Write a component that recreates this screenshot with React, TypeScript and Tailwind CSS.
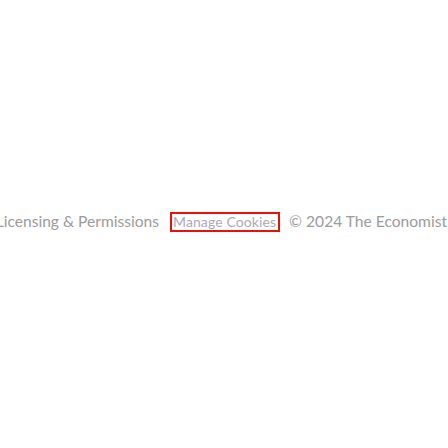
export default function App() {
  return (
    <div className="w-[448px] h-[448px] bg-white overflow-hidden font-['Lato',sans-serif]">
      <div className="flex justify-end items-center pt-[210px] pr-[1px] whitespace-nowrap text-[15.6px] text-[#9b9b9b]">
        <span className="shrink-0">Licensing &amp; Permissions</span>
        <button className="shrink-0 ml-[11px] mr-[9px] h-[20px] pl-[1px] pr-[2px] border-2 border-[#e3120b] text-[#a9a9b6] leading-none text-[14px] tracking-[0.1px]">
          Manage Cookies
        </button>
        <span className="shrink-0">© 2024 The Economist</span>
      </div>
    </div>
  );
}
